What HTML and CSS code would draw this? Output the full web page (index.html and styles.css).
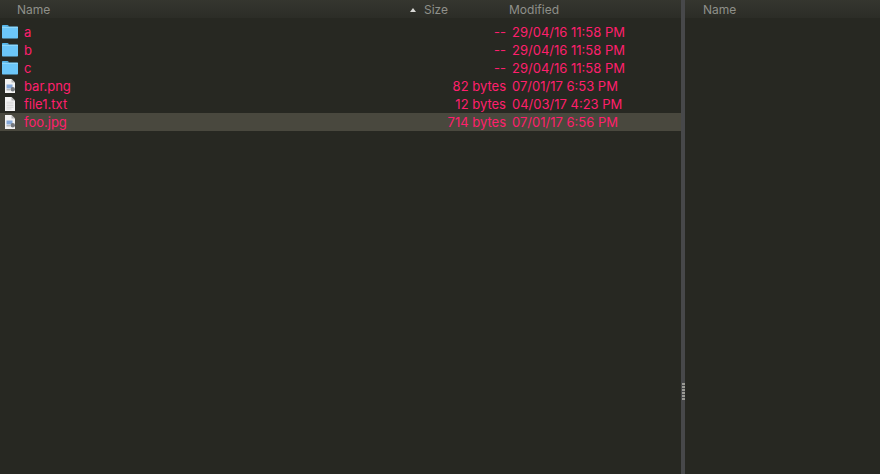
FILE: index.html
```html
<!DOCTYPE html>
<html lang="en">
<head>
    <meta charset="UTF-8">
    <meta name="viewport" content="width=device-width, initial-scale=1.0">
    <title>Files</title>
    <link rel="stylesheet" href="styles.css">
</head>
<body>
    <svg class="icon-defs" width="0" height="0">
        <symbol id="folder" viewBox="0 0 18 16">
            <path d="M1 3.2V1.8C1 1.3 1.3 1 1.8 1h4.6c.5 0 .8.2 1 .5l.7 1z" fill="#55b6ea"/>
            <path d="M1 3.6c0-.6.4-1 1-1h14c.6 0 1 .4 1 1v10c0 .6-.4 1-1 1H2c-.6 0-1-.4-1-1z" fill="#6cc6f8"/>
            <path d="M1 3.4h16" stroke="#9adcfb" stroke-width=".8"/>
        </symbol>
        <symbol id="image-file" viewBox="0 0 14 16">
            <path d="M2 1h6.5L12 4.5V15H2z" fill="#f2f2f2"/>
            <path d="M8.5 1v3.500H12z" fill="#b5b5b5"/>
            <rect x="3.500" y="6.500" width="6" height="4" fill="#86a9d8"/>
            <circle cx="9.800" cy="11.300" r="2.200" fill="#74787d"/>
            <rect x="3.500" y="11" width="4" height="1.500" fill="#b4b7ba"/>
        </symbol>
        <symbol id="text-file" viewBox="0 0 14 16">
            <path d="M2 1h6.500L12 4.500V15H2z" fill="#f2f2f2"/>
            <path d="M8.500 1v3.500H12z" fill="#b5b5b5"/>
            <path d="M3.500 6.200h7M3.500 7.900h7M3.500 9.600h7M3.500 11.300h7M3.500 13h5" stroke="#cdcdcd" stroke-width=".7"/>
        </symbol>
    </svg>

    <div class="browser">
        <section class="pane pane-left">
            <div class="col-header">
                <span class="col-name">Name</span>
                <span class="col-size"><i class="sort-arrow"></i>Size</span>
                <span class="col-modified">Modified</span>
            </div>
            <ul class="file-list">
                <li class="row">
                    <svg class="icon icon-folder"><use href="#folder"/></svg>
                    <span class="name">a</span><span class="size">--</span><span class="modified">29/04/16 11:58 PM</span>
                </li>
                <li class="row">
                    <svg class="icon icon-folder"><use href="#folder"/></svg>
                    <span class="name">b</span><span class="size">--</span><span class="modified">29/04/16 11:58 PM</span>
                </li>
                <li class="row">
                    <svg class="icon icon-folder"><use href="#folder"/></svg>
                    <span class="name">c</span><span class="size">--</span><span class="modified">29/04/16 11:58 PM</span>
                </li>
                <li class="row">
                    <svg class="icon icon-file"><use href="#image-file"/></svg>
                    <span class="name">bar.png</span><span class="size">82 bytes</span><span class="modified">07/01/17 6:53 PM</span>
                </li>
                <li class="row">
                    <svg class="icon icon-file"><use href="#text-file"/></svg>
                    <span class="name">file1.txt</span><span class="size">12 bytes</span><span class="modified">04/03/17 4:23 PM</span>
                </li>
                <li class="row selected">
                    <svg class="icon icon-file"><use href="#image-file"/></svg>
                    <span class="name">foo.jpg</span><span class="size">714 bytes</span><span class="modified">07/01/17 6:56 PM</span>
                </li>
            </ul>
        </section>
        <div class="divider">
            <div class="grip"><i></i><i></i><i></i><i></i><i></i><i></i></div>
        </div>
        <section class="pane pane-right">
            <div class="col-header">
                <span class="col-name">Name</span>
            </div>
        </section>
    </div>
</body>
</html>
```

FILE: styles.css
```css
* {
    box-sizing: border-box;
}

html, body {
    margin: 0;
    height: 100%;
}

body {
    background-color: #272822;
    font-family: Inter, "Liberation Sans", sans-serif;
    font-size: 13px;
    overflow: hidden;
}

.icon-defs {
    display: block;
    height: 0;
}

.browser {
    display: flex;
    height: 474px;
}

.pane-left {
    flex: none;
    width: 681px;
}

.pane-right {
    flex: 1;
}

.col-header {
    display: flex;
    align-items: center;
    height: 18px;
    background: linear-gradient(#35362f, #2c2d27);
    color: #8f908a;
    font-size: 12px;
    margin-bottom: 5px;
}

.col-name {
    padding-left: 17px;
    width: 424px;
}

.pane-right .col-name {
    padding-left: 18px;
    width: auto;
}

.col-size {
    position: relative;
    width: 85px;
}

.sort-arrow {
    position: absolute;
    left: -14px;
    top: 6px;
    border-left: 3.5px solid transparent;
    border-right: 3.5px solid transparent;
    border-bottom: 4px solid #d8d8d5;
}

.file-list {
    list-style: none;
    margin: 0;
    padding: 0;
}

.row {
    display: flex;
    align-items: center;
    height: 18px;
    color: #ff1f6d;
}

.row.selected {
    background-color: #49483e;
}

.icon {
    flex: none;
    height: 16px;
}

.icon-folder {
    width: 18px;
    margin-left: 1px;
    margin-right: 5px;
}

.icon-file {
    width: 14px;
    margin-left: 3px;
    margin-right: 7px;
}

.name {
    flex: none;
    width: 300px;
}

.size {
    flex: none;
    width: 182px;
    text-align: right;
}

.modified {
    flex: none;
    margin-left: 6px;
}

.divider {
    position: relative;
    flex: none;
    width: 4px;
    background-color: #47484a;
}

.grip {
    position: absolute;
    left: 1px;
    top: 383px;
    display: flex;
    flex-direction: column;
    gap: 1px;
}

.grip i {
    display: block;
    width: 3px;
    height: 2px;
    background-color: #9a9a94;
}
```
